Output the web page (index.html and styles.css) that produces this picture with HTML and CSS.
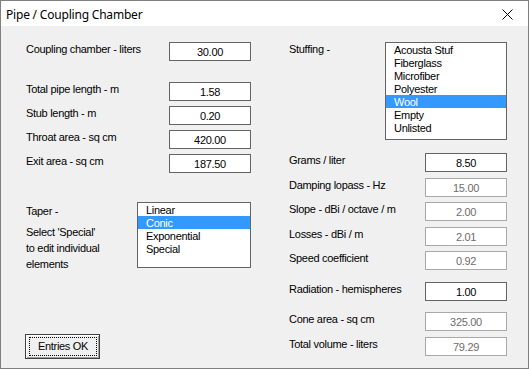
FILE: index.html
```html
<!DOCTYPE html>
<html lang="en">
<head>
    <meta charset="UTF-8">
    <meta name="viewport" content="width=device-width, initial-scale=1.0">
    <title>Pipe / Coupling Chamber</title>
    <link rel="stylesheet" href="styles.css">
</head>
<body>
    <div class="window">
        <div class="titlebar">
            <span class="title">Pipe / Coupling Chamber</span>
            <svg class="close" width="11" height="11" viewBox="0 0 11 11">
                <path d="M0.5 0.5 L10.5 10.5 M10.5 0.5 L0.5 10.5" stroke="#000" stroke-width="1" fill="none"/>
            </svg>
        </div>

        <div class="content">
            <div class="col col-left">
                <div class="row first">
                    <span class="label">Coupling chamber - liters</span>
                    <span class="field">30.00</span>
                </div>
                <div class="row spaced">
                    <span class="label">Total pipe length - m</span>
                    <span class="field">1.58</span>
                </div>
                <div class="row">
                    <span class="label">Stub length - m</span>
                    <span class="field">0.20</span>
                </div>
                <div class="row">
                    <span class="label">Throat area - sq cm</span>
                    <span class="field">420.00</span>
                </div>
                <div class="row">
                    <span class="label">Exit area - sq cm</span>
                    <span class="field">187.50</span>
                </div>

                <div class="taper">
                    <div class="taper-text">
                        <p class="taper-title">Taper -</p>
                        <p>Select 'Special'<br>to edit individual<br>elements</p>
                    </div>
                    <ul class="listbox taper-list">
                        <li>Linear</li>
                        <li class="selected">Conic</li>
                        <li>Exponential</li>
                        <li>Special</li>
                    </ul>
                </div>

                <button class="btn"><span>Entries OK</span></button>
            </div>

            <div class="col col-right">
                <div class="stuffing">
                    <span class="label">Stuffing -</span>
                    <ul class="listbox stuff-list">
                        <li>Acousta Stuf</li>
                        <li>Fiberglass</li>
                        <li>Microfiber</li>
                        <li>Polyester</li>
                        <li class="selected">Wool</li>
                        <li>Empty</li>
                        <li>Unlisted</li>
                    </ul>
                </div>
                <div class="row after-list">
                    <span class="label">Grams / liter</span>
                    <span class="field">8.50</span>
                </div>
                <div class="row wide">
                    <span class="label">Damping lopass - Hz</span>
                    <span class="field disabled">15.00</span>
                </div>
                <div class="row">
                    <span class="label">Slope - dBi / octave / m</span>
                    <span class="field disabled">2.00</span>
                </div>
                <div class="row wide">
                    <span class="label">Losses - dBi / m</span>
                    <span class="field disabled">2.01</span>
                </div>
                <div class="row">
                    <span class="label">Speed coefficient</span>
                    <span class="field disabled">0.92</span>
                </div>
                <div class="row group">
                    <span class="label">Radiation - hemispheres</span>
                    <span class="field">1.00</span>
                </div>
                <div class="row group-b">
                    <span class="label">Cone area - sq cm</span>
                    <span class="field disabled">325.00</span>
                </div>
                <div class="row wide">
                    <span class="label">Total volume - liters</span>
                    <span class="field disabled">79.29</span>
                </div>
            </div>
        </div>
    </div>
</body>
</html>
```

FILE: styles.css
```css
body {
    margin: 0;
    background-color: #f0f0f0;
}
.window {
    width: 529px;
    height: 369px;
    box-sizing: border-box;
    border: 1px solid #7f7f7f;
    background-color: #f0f0f0;
    font-family: "Liberation Sans", Arial, sans-serif;
    font-size: 11px;
    letter-spacing: -0.3px;
    color: #000;
}
.titlebar {
    height: 25px;
    background-color: #fff;
    display: flex;
    align-items: center;
    justify-content: space-between;
    padding: 0 15px 0 5px;
}
.title {
    font-family: "Noto Sans", "Open Sans", sans-serif;
    font-size: 12px;
    letter-spacing: -0.2px;
    line-height: 25px;
    padding-top: 1px;
}
.close {
    display: block;
    margin-top: 2px;
}
.content {
    display: flex;
    padding: 16px 0 0 25px;
}
.col {
    display: flex;
    flex-direction: column;
}
.col-left {
    width: 225px;
}
.col-right {
    width: 218px;
    margin-left: 38px;
}
.row {
    display: flex;
    height: 19px;
    margin-top: 5px;
}
.row.first {
    margin-top: 0;
}
.row.spaced {
    margin-top: 21px;
}
.row.after-list {
    margin-top: 13px;
}
.row.wide {
    margin-top: 6px;
}
.row.group {
    margin-top: 12px;
}
.row.group-b {
    margin-top: 11px;
}
.label {
    flex: 1;
    line-height: 13px;
    padding-top: 1px;
    white-space: nowrap;
}
.field {
    width: 82px;
    height: 19px;
    box-sizing: border-box;
    border: 1px solid #646464;
    background-color: #fff;
    text-align: center;
    line-height: 16px;
    padding-top: 1px;
}
.field.disabled {
    border-color: #a9a9a9;
    color: #6d6d6d;
}
.listbox {
    list-style: none;
    margin: 0;
    padding: 0;
    box-sizing: border-box;
    border: 1px solid #646464;
    background-color: #fff;
}
.listbox li {
    height: 13px;
    box-sizing: border-box;
    padding: 1px 0 0 8px;
    line-height: 13px;
    white-space: nowrap;
}
.listbox li.selected {
    background-color: #3399ff;
    color: #fff;
}
.stuffing {
    display: flex;
}
.stuff-list {
    width: 122px;
    height: 98px;
}
.taper {
    display: flex;
    margin-top: 29px;
}
.taper-text {
    flex: 1;
    line-height: 16px;
    padding-top: 1px;
}
.taper-text p {
    margin: 0;
}
.taper-text .taper-title {
    margin-bottom: 5px;
}
.taper-list {
    width: 114px;
    height: 66px;
}
.btn {
    width: 75px;
    height: 25px;
    margin: 62px 0 0 -1px;
    padding: 2px 2px 2px 3px;
    box-sizing: border-box;
    border: 1px solid #404040;
    background-color: #f0f0f0;
    box-shadow: inset 1px 1px #fff, inset -1px -1px #a0a0a0;
    font: inherit;
    letter-spacing: inherit;
    color: #000;
}
.btn span {
    display: block;
    height: 19px;
    box-sizing: border-box;
    border: 1px dotted #000;
    line-height: 17px;
}
```
